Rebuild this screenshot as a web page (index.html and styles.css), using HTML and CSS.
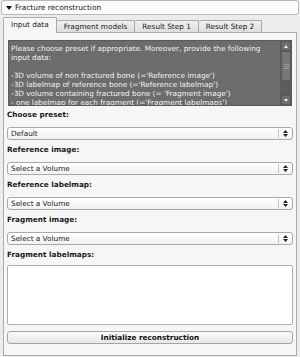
FILE: index.html
```html
<!DOCTYPE html>
<html lang="en">
<head>
  <meta charset="UTF-8">
  <title>Fracture reconstruction</title>
  <link rel="stylesheet" href="styles.css">
</head>
<body>
  <div class="app">
    <div class="section-head">
      <span class="caret"></span>
      <span>Fracture reconstruction</span>
    </div>

    <div class="tabs">
      <div class="tab active">Input data</div>
      <div class="tab">Fragment models</div>
      <div class="tab">Result Step 1</div>
      <div class="tab">Result Step 2</div>
    </div>

    <div class="panel">
      <div class="info">
        <div class="info-text">Please choose preset if appropriate. Moreover, provide the following input data:

-3D volume of non fractured bone (='Reference image')
-3D labelmap of reference bone (='Reference labelmap')
-3D volume containing fractured bone (= 'Fragment image')
- one labelmap for each fragment (='Fragment labelmaps')</div>
        <div class="scrollbar">
          <div class="sb-btn"><span class="tri-up"></span></div>
          <div class="sb-track">
            <div class="sb-thumb"><span></span><span></span><span></span></div>
          </div>
          <div class="sb-btn"><span class="tri-down"></span></div>
        </div>
      </div>

      <div class="field first">
        <div class="label">Choose preset:</div>
        <div class="combo">
          <span class="combo-text">Default</span>
          <span class="combo-arrow"><svg width="5" height="7" viewBox="0 0 5 7"><path d="M2.5 0L5 3H0z M0 4H5L2.5 7z" fill="#222"/></svg></span>
        </div>
      </div>

      <div class="field">
        <div class="label">Reference image:</div>
        <div class="combo">
          <span class="combo-text">Select a Volume</span>
          <span class="combo-arrow"><svg width="5" height="7" viewBox="0 0 5 7"><path d="M2.5 0L5 3H0z M0 4H5L2.5 7z" fill="#222"/></svg></span>
        </div>
      </div>

      <div class="field">
        <div class="label">Reference labelmap:</div>
        <div class="combo">
          <span class="combo-text">Select a Volume</span>
          <span class="combo-arrow"><svg width="5" height="7" viewBox="0 0 5 7"><path d="M2.5 0L5 3H0z M0 4H5L2.5 7z" fill="#222"/></svg></span>
        </div>
      </div>

      <div class="field">
        <div class="label">Fragment image:</div>
        <div class="combo">
          <span class="combo-text">Select a Volume</span>
          <span class="combo-arrow"><svg width="5" height="7" viewBox="0 0 5 7"><path d="M2.5 0L5 3H0z M0 4H5L2.5 7z" fill="#222"/></svg></span>
        </div>
      </div>

      <div class="label">Fragment labelmaps:</div>
      <div class="listbox"></div>

      <button class="action-btn">Initialize reconstruction</button>
    </div>
  </div>
</body>
</html>
```

FILE: styles.css
```css
/* Base */
body {
  margin: 0;
  background: #ececec;
  font-family: "DejaVu Sans", sans-serif;
  font-size: 7.3px;
  color: #1a1a1a;
}

.app {
  width: 300px;
  height: 357px;
  display: flex;
  flex-direction: column;
}

/* Collapsible header */
.section-head {
  margin: 0 1px;
  height: 13px;
  border: 1px solid #b9b9b9;
  border-radius: 3px;
  background: #fbfbfb;
  display: flex;
  align-items: center;
  gap: 3px;
  padding-left: 4px;
  font-size: 7.4px;
}

.caret {
  width: 0;
  height: 0;
  border-left: 3px solid transparent;
  border-right: 3px solid transparent;
  border-top: 4px solid #111;
}

/* Tabs */
.tabs {
  display: flex;
  align-items: flex-end;
  margin: 2px 0 0 3px;
  height: 15px;
}

.tab {
  height: 11px;
  line-height: 11px;
  padding: 0 7px;
  border: 1px solid #ababab;
  border-bottom: none;
  border-left: none;
  background: linear-gradient(#f0f0f0, #dedede);
  border-radius: 2px 2px 0 0;
}

.tab.active {
  height: 15px;
  line-height: 14px;
  border-left: 1px solid #ababab;
  background: #f6f6f6;
  position: relative;
  z-index: 1;
  margin-bottom: -1px;
}

/* Panel */
.panel {
  margin: 0 3px;
  border: 1px solid #ababab;
  background: #f6f6f6;
  padding: 7px 3px 11px 3px;
  display: flex;
  flex-direction: column;
}

.info {
  height: 64px;
  margin: 0 1px;
  border: 1px solid #5a5a5a;
  background: #6c6c6c;
  display: flex;
  overflow: hidden;
}

.info-text {
  flex: 1;
  padding: 3px 3px 0 2px;
  color: #f2f2f2;
  line-height: 9px;
  white-space: pre-line;
  overflow: hidden;
}

.scrollbar {
  width: 10px;
  display: flex;
  flex-direction: column;
  background: #626262;
  border-left: 1px solid #5a5a5a;
}

.sb-btn {
  height: 10px;
  display: flex;
  align-items: center;
  justify-content: center;
  background: #6e6e6e;
  border: 1px solid #585858;
  box-sizing: border-box;
}

.tri-up {
  border-left: 2.5px solid transparent;
  border-right: 2.5px solid transparent;
  border-bottom: 3px solid #eee;
}

.tri-down {
  border-left: 2.5px solid transparent;
  border-right: 2.5px solid transparent;
  border-top: 3px solid #eee;
}

.sb-track {
  flex: 1;
  background: #5e5e5e;
}

.sb-thumb {
  height: 30px;
  background: #777;
  border: 1px solid #5a5a5a;
  box-sizing: border-box;
  display: flex;
  flex-direction: column;
  align-items: center;
  justify-content: center;
  gap: 1px;
}

.sb-thumb span {
  width: 5px;
  height: 1px;
  background: #9a9a9a;
}

/* Form fields */
.field {
  display: flex;
  flex-direction: column;
  margin-bottom: 4px;
}

.field.first {
  margin-top: 3px;
}

.label {
  height: 12px;
  line-height: 12px;
  font-weight: bold;
}

.field .label {
  margin-bottom: 6px;
}

.combo {
  height: 13px;
  border: 1px solid #a9a9a9;
  border-radius: 3px;
  background: linear-gradient(#ffffff, #f1f1f1);
  display: flex;
  align-items: center;
  box-sizing: border-box;
}

.combo-text {
  flex: 1;
  padding-left: 3px;
}

.combo-arrow {
  width: 13px;
  height: 9px;
  border-left: 1px solid #c4c4c4;
  display: flex;
  align-items: center;
  justify-content: center;
}

.listbox {
  margin-top: 4px;
  height: 60px;
  border: 1px solid #b0b0b0;
  border-radius: 2px;
  background: #fff;
  box-sizing: border-box;
}

.action-btn {
  margin-top: 6px;
  height: 13px;
  padding: 0;
  border: 1px solid #a5a5a5;
  border-radius: 3px;
  background: linear-gradient(#fafafa, #e8e8e8);
  font-family: "DejaVu Sans", sans-serif;
  font-size: 7.3px;
  font-weight: bold;
  color: #111;
}
```
